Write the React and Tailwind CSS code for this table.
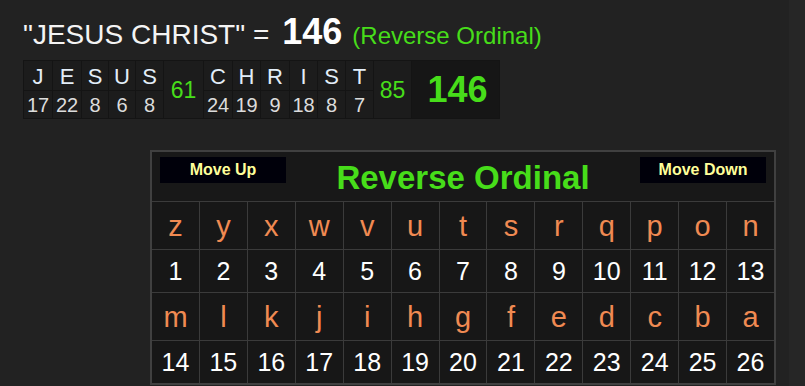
import React from "react";

const word1 = [
  ["J", 17],
  ["E", 22],
  ["S", 8],
  ["U", 6],
  ["S", 8],
];
const word2 = [
  ["C", 24],
  ["H", 19],
  ["R", 9],
  ["I", 18],
  ["S", 8],
  ["T", 7],
];

const lettersA = "zyxwvutsrqpon".split("");
const lettersB = "mlkjihgfedcba".split("");

function LetterCell({ l }) {
  return (
    <div className="flex h-full items-center justify-center bg-[#1c1c1c] pt-[1px] text-[22px] leading-[25px] text-[#e2edf8]">
      {l}
    </div>
  );
}
function NumCell({ n }) {
  return (
    <div className="flex h-full items-center justify-center bg-[#1c1c1c] pt-[1px] text-[20px] leading-[23px] text-[#dcdcdc]">
      {n}
    </div>
  );
}

export default function App() {
  return (
    <div
      className="flex h-[386px] w-[805px] overflow-hidden bg-[#222222]"
      style={{ fontFamily: '"Liberation Sans", Arial, sans-serif' }}
    >
      <div className="flex flex-1 flex-col pl-[23px] pt-[16px]">
        {/* Heading */}
        <div className="flex h-[36px] items-baseline whitespace-nowrap leading-[32px]">
          <span className="text-[28px] text-[#f4f4f4]">"JESUS CHRIST" =</span>
          <span className="ml-[13px] text-[36px] font-bold leading-[32px] text-white">146</span>
          <span className="ml-[10px] text-[24px] text-[#47dd1a]">(Reverse Ordinal)</span>
        </div>

        {/* Breakdown table */}
        <div className="mt-[8px] grid w-max grid-cols-[28px_28px_26px_26px_27px_39px_28px_27px_28px_27px_27px_27px_37px_87px] grid-rows-[29px_27px] gap-px bg-[#141414] p-px">
          {word1.map(([l], i) => (
            <div key={"a" + i} className="row-start-1" style={{ gridColumnStart: i + 1 }}>
              <LetterCell l={l} />
            </div>
          ))}
          {word1.map(([, n], i) => (
            <div key={"b" + i} className="row-start-2" style={{ gridColumnStart: i + 1 }}>
              <NumCell n={n} />
            </div>
          ))}
          <div className="col-start-6 row-span-2 row-start-1 flex items-center justify-center bg-[#1c1c1c] text-[23px] leading-[26px] text-[#47dd1a]">
            61
          </div>
          {word2.map(([l], i) => (
            <div key={"c" + i} className="row-start-1" style={{ gridColumnStart: i + 7 }}>
              <LetterCell l={l} />
            </div>
          ))}
          {word2.map(([, n], i) => (
            <div key={"d" + i} className="row-start-2" style={{ gridColumnStart: i + 7 }}>
              <NumCell n={n} />
            </div>
          ))}
          <div className="col-start-13 row-span-2 row-start-1 flex items-center justify-center bg-[#1c1c1c] text-[23px] leading-[26px] text-[#47dd1a]">
            85
          </div>
          <div className="col-start-14 row-span-2 row-start-1 flex items-center justify-center bg-[#161616] pl-[4px] text-[36px] font-bold leading-[36px] text-[#47dd1a]">
            146
          </div>
        </div>

        {/* Cipher panel */}
        <div className="ml-[127px] mt-[31px] flex w-[626px] flex-col gap-px border-2 border-[#404040] bg-[#3b3b3b]">
          <div className="flex h-[49px] items-start justify-between bg-[#181818] px-[8px] pt-[5px]">
            <div className="flex h-[26px] w-[126px] items-center justify-center bg-[#00000a] text-[16px] font-bold text-[#ffff99]">
              Move Up
            </div>
            <div className="mt-[3px] text-[33px] font-bold leading-[36px] text-[#47dd1a]">
              Reverse Ordinal
            </div>
            <div className="flex h-[26px] w-[126px] items-center justify-center bg-[#00000a] text-[16px] font-bold text-[#ffff99]">
              Move Down
            </div>
          </div>
          {[lettersA, lettersB].map((row, r) => (
            <React.Fragment key={r}>
              <div className="grid h-[47px] grid-cols-13 gap-px">
                {row.map((l) => (
                  <div key={l} className="flex items-center justify-center bg-[#171717] text-[29px] leading-[32px] text-[#f08a52]">
                    {l}
                  </div>
                ))}
              </div>
              <div className="grid h-[42px] grid-cols-13 gap-px">
                {row.map((l, i) => (
                  <div key={l} className="flex items-center justify-center bg-[#171717] text-[25px] leading-[28px] text-white">
                    {r * 13 + i + 1}
                  </div>
                ))}
              </div>
            </React.Fragment>
          ))}
        </div>
      </div>
      <div className="w-[16px] shrink-0 bg-[#262626]" />
    </div>
  );
}
